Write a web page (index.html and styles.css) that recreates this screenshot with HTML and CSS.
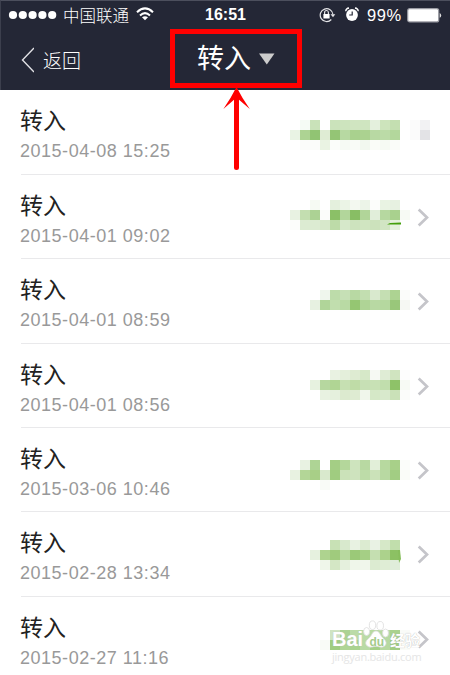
FILE: index.html
```html
<!DOCTYPE html>
<html lang="zh-CN">
<head>
<meta charset="utf-8">
<title>转入</title>
<link rel="stylesheet" href="styles.css">
</head>
<body>
<header class="header">
  <div class="status">
    <svg class="signal" width="50" height="12" viewBox="0 0 50 12"><g fill="#fff"><circle cx="5" cy="6" r="4.1"/><circle cx="14.8" cy="6" r="4.1"/><circle cx="24.6" cy="6" r="4.1"/><circle cx="34.4" cy="6" r="4.1"/><circle cx="44.2" cy="6" r="4.1"/></g></svg>
    <span class="carrier">中国联通</span>
    <svg class="wifi" width="18" height="14" viewBox="0 0 18 14" fill="none" stroke="#fff" stroke-width="2"><path d="M1 5.2Q9-2.4 17 5.2M4 8.4Q9 3.8 14 8.4"/><path d="M6 10.3Q9 8 12 10.3L9 13.3Z" fill="#fff" stroke="none"/></svg>
    <span class="clock">16:51</span>
    <svg class="lock" width="17" height="16" viewBox="0 0 17 16" fill="none" stroke="#e4e4e7" stroke-width="1.2"><path d="M12.3 12.5A6.4 6.4 0 1 1 14 7.5"/><path d="M11.5 7.2h4.8L14 10.3Z" fill="#e4e4e7" stroke="none"/><path d="M4.4 7h6.2v4.5H4.4z" fill="#fff" stroke="none"/><path d="M5.6 7V5.4a1.9 1.9 0 0 1 3.8 0V7"/></svg>
    <svg class="alarm" width="14" height="15" viewBox="0 0 14 15"><circle cx="7" cy="8" r="5.9" fill="#fff"/><path d="M.7 4.3Q1 1.3 4 1M13.3 4.3Q13 1.3 10 1" fill="none" stroke="#fff" stroke-width="1.3"/><path d="M7.2 4.5V8H4.2" fill="none" stroke="#242736" stroke-width="1.2"/></svg>
    <span class="percent">99%</span>
    <svg class="battery" width="35" height="15" viewBox="0 0 35 15"><rect x=".7" y=".7" width="31" height="13.2" rx="2" fill="#fff" stroke="#9a9ba3" stroke-width="1.2"/><path d="M32.7 5q1.5.6 1.5 2.4t-1.5 2.4z" fill="#ddd"/></svg>
  </div>
  <nav class="nav">
    <svg class="back-icon" width="14" height="26" viewBox="0 0 14 26" fill="none" stroke="#e2e2e6" stroke-width="1.4"><path d="M14 1L2.5 13 14 25"/></svg>
    <span class="back">返回</span>
    <div class="picker"><span>转入</span><svg width="16" height="12" viewBox="0 0 16 12"><path d="M0 .5h15.5L7.8 11.5Z" fill="#ccc"/></svg></div>
  </nav>
</header>
<main id="list">
</main>
<svg class="arrow" width="28" height="84" viewBox="0 0 28 84"><path d="M13.5 0Q19 11 26.8 22L16 12.8V80.5a2.5 2.5 0 0 1-5 0V12.8L.4 22Q8 11 13.5 0Z" fill="#f00"/></svg>
<div class="mark">
  <div class="mark-top">
    <span class="mark-bai">Bai</span>
    <svg width="26" height="29" viewBox="0 0 26 29"><g fill="#fff" stroke="#dcdcdc" stroke-width=".8"><ellipse cx="3.6" cy="11.5" rx="3" ry="4"/><ellipse cx="9.5" cy="5.2" rx="3.2" ry="4.3"/><ellipse cx="17.2" cy="5.8" rx="3.3" ry="4.3"/><ellipse cx="22.5" cy="13" rx="3" ry="4"/><path d="M13 11c4 0 4 5 8 8 5 5 0 9-4 8-3-1-5-1-8 0-5 1-9-4-4-8 4-3 4-8 8-8Z"/></g><text class="mark-du" x="6.5" y="25.5">du</text></svg>
    <span class="mark-cn">经验</span>
  </div>
  <div class="mark-url">jingyan.baidu.com</div>
</div>
<script src="script.js"></script>
</body>
</html>
```
FILE: styles.css
```css
* { box-sizing: border-box; }
body { margin: 0; width: 450px; height: 675px; overflow: hidden; position: relative; background: #fff; font-family: "Liberation Sans", "Noto Sans CJK SC", sans-serif; }
svg { display: block; flex: none; }
.header { height: 90px; background: #242736; border-top: 1px solid #4c4f5d; border-left: 1px solid #3c3f4d; color: #fff; }
.status { display: flex; align-items: center; height: 28px; padding-left: 7px; white-space: nowrap; }
.carrier { width: 67px; margin-left: 5px; margin-top: -1px; font-size: 16.5px; line-height: 26px; font-weight: 300; font-family: "Noto Sans CJK SC", sans-serif; }
.wifi { margin-left: 6px; margin-top: -2px; }
.clock { width: 41px; margin-left: 51px; font-size: 16px; font-weight: bold; }
.lock { margin-left: 73px; }
.alarm { margin-left: 9px; margin-top: -2px; }
.percent { width: 37px; margin-left: 8px; font-size: 16.5px; letter-spacing: .6px; }
.battery { margin-left: 3px; }
.nav { display: flex; align-items: center; height: 59px; padding-left: 19px; font-family: "Noto Sans CJK SC", sans-serif; }
.back-icon { margin-top: 2px; }
.back { width: 40px; margin-left: 9px; margin-top: 1px; font-size: 19px; font-weight: 300; white-space: nowrap; }
.picker { display: flex; align-items: center; width: 132px; height: 59px; margin-left: 87px; padding-left: 22px; border: 5px solid #f00; font-size: 27px; white-space: nowrap; line-height: 40px; }
.picker span { margin-top: -3px; }
.picker svg { margin-left: 8px; margin-top: 1px; }
.row { display: flex; height: 84px; }
.row.tall { height: 85px; }
.row-text { width: 270px; padding-left: 20px; margin-right: 20px; }
.title { margin-top: 11px; height: 38px; font: 23px/36px "Noto Sans CJK SC", sans-serif; color: #222; }
.date { height: 22px; margin-top: 1px; font-size: 18px; line-height: 22px; letter-spacing: .52px; color: #999; white-space: nowrap; }
.line { height: 1px; margin-top: -1px; margin-left: 21px; background: #e9e9eb; }
.arrow { position: absolute; left: 223px; top: 87px; }
.mark { position: absolute; left: 332px; top: 620px; width: 95px; color: #fff; }
.mark-top { display: flex; height: 30px; }
.mark-bai { width: 31px; padding-top: 9px; font: bold 20px/23px "Liberation Sans", sans-serif; text-shadow: 0 0 1px #bbb; }
.mark-cn { padding-top: 9px; margin-left: 1px; font: bold 15px/24px "Noto Sans CJK SC", sans-serif; text-shadow: 0 0 1px #aaa; white-space: nowrap; }
.mark-bai, .mark-cn { margin-top: 8px; padding-top: 0; }
.mark-du { font: bold 12px "Liberation Sans", sans-serif; fill: #a5cb8c; }
.mark-url { font: 11px/13px "Open Sans", sans-serif; letter-spacing: -.25px; color: #e5e5e5; white-space: nowrap; }
```
FILE: script.js
```js
// Each mosaic is a list of rows of 10px cells; "-" is an empty cell.
const rows = [
  { date: "2015-04-08 15:25", top: 30, tall: true, cells: [
    "- f5fbf5 c9e2b9 - cbe3bb cde4be d0e5c1 cfe5c0 e4f0dd cde4bc c4dfb1 - fbfbfb f2f2f3",
    "e9f3e4 add393 91c473 dfecd4 94c575 b7d9a2 a9d18e abd290 b8d9a3 bbdba7 b3d79c - fbfbfb e3e3e6",
    "- fbfcfa fbfcfa eaf3e3 fbfdfa f6faf4 f9fbf7 f2f8ef fafcf8 f6faf3 fafcf9 - - -"] },
  { date: "2015-04-01 09:02", top: 25, cells: [
    "- - f6faf3 - e4f0dd ebf4e6 f3f8f0 ecf4e8 fcfdfb e9f3e3 e7f1e1 -",
    "e8f2e2 c3deb0 acd294 fbfcfa 8bc067 b2d69b 88be64 b1d599 e1eeda b6d8a0 a9d18e f7faf4",
    "fcfdfb dcebd2 dcebd2 d7e8cb bddba8 d6e8ca cde3be d0e5c1 cce2bc d1e5c3 e4f0dc -"] },
  { date: "2015-04-01 08:59", top: 31, tall: true, cells: [
    "- - - eff6ed bddcaa c6e0b6 b8d9a3 c2deb0 d9e9ce c5dfb3 add392 fbfcfa",
    "- - e7f1e1 b0d599 c1deae b9daa4 95c672 afd496 b8d9a3 b5d89f 99c77a f6f8f3",
    "- - - - - fdfefd - fdfefd - fdfefd fdfefd -"] },
  { date: "2015-04-01 08:56", top: 26, cells: [
    "- - - - e9f2e2 e4efdb deebd2 d6e8c8 f6f9f3 dfecd5 d0e4c0 fdfdfd",
    "- - e7f2e0 b6d79f b0d594 c6e0b2 bfdca7 c7e0b5 c8e1b5 c1dead 8ec268 f7faf4",
    "- - - e8f2e1 e5f0dd dceacf deebd2 f0f6eb d5e8c7 d8e9cc cae1b8 fbfcfa"] },
  { date: "2015-03-06 10:46", top: 32, cells: [
    "- e8f2e2 aed495 - a4ce85 b4d79b cee4be b8d9a2 e2efd9 b7d99f a8d089 fbfdfa",
    "e8f2e1 b3d697 a8cf87 d9e9cd a0cc80 cbe2b9 cee3be bddca8 cbe2b9 b8d9a2 a2cd83 fafcf8",
    "- - - f9fbf7 - - - - - - - -"] },
  { date: "2015-02-28 13:34", top: 28, tall: true, cells: [
    "- - - - c8e1b5 d8e9cd e8f2e2 dcebd1 e9f2e4 d6e8c8 c1deac -",
    "- - e6f1df aed38f a0cb7d b8d9a0 9bc978 a5cf85 c5dfb1 acd28c 8cc163 -",
    "- - - eff6ea d4e7c5 e5f0dd eff6ea f0f6eb dcebd1 dfedd5 e0edda -"] },
  { date: "2015-02-27 11:16", top: 33, cells: [
    "- - - - cfe4c2 acd293 bbdba7 bbdba7 b8d9a2 b7d9a2 aad28f f9fbf8",
    "- - - f9fbf7 a0cd82 afd597 aad28f b9daa5 a5cf88 b7d9a1 a1cd82 fafcf8"] }
];

document.getElementById("list").innerHTML = rows.map((row, i) => {
  let art = row.cells.map((line, y) => line.split(" ").map((c, x) =>
    c === "-" ? "" : `<rect x="${x * 10}" y="${row.top + y * 10}" width="10" height="10" fill="#${c}"/>`
  ).join("")).join("");
  if (i === 1) art += '<path d="M100 48l11-.5v2h-14z" fill="#439f0b"/>';
  if (i === 5) art += '<path d="M108 38h2l1 9-2 4z" fill="#87be5c"/>';
  if (i > 0) art += '<path d="M128.7 34.5l8.3 8-8.3 8" fill="none" stroke="#c5c5ca" stroke-width="2.7"/>';
  const h = row.tall ? 85 : 84;
  const rule = i < rows.length - 1 ? '<div class="line"></div>' : "";
  return `<section class="row${row.tall ? " tall" : ""}"><div class="row-text"><div class="title">转入</div><div class="date">${row.date}</div></div><svg width="141" height="${h}" viewBox="0 0 141 ${h}">${art}</svg></section>${rule}`;
}).join("");
```
